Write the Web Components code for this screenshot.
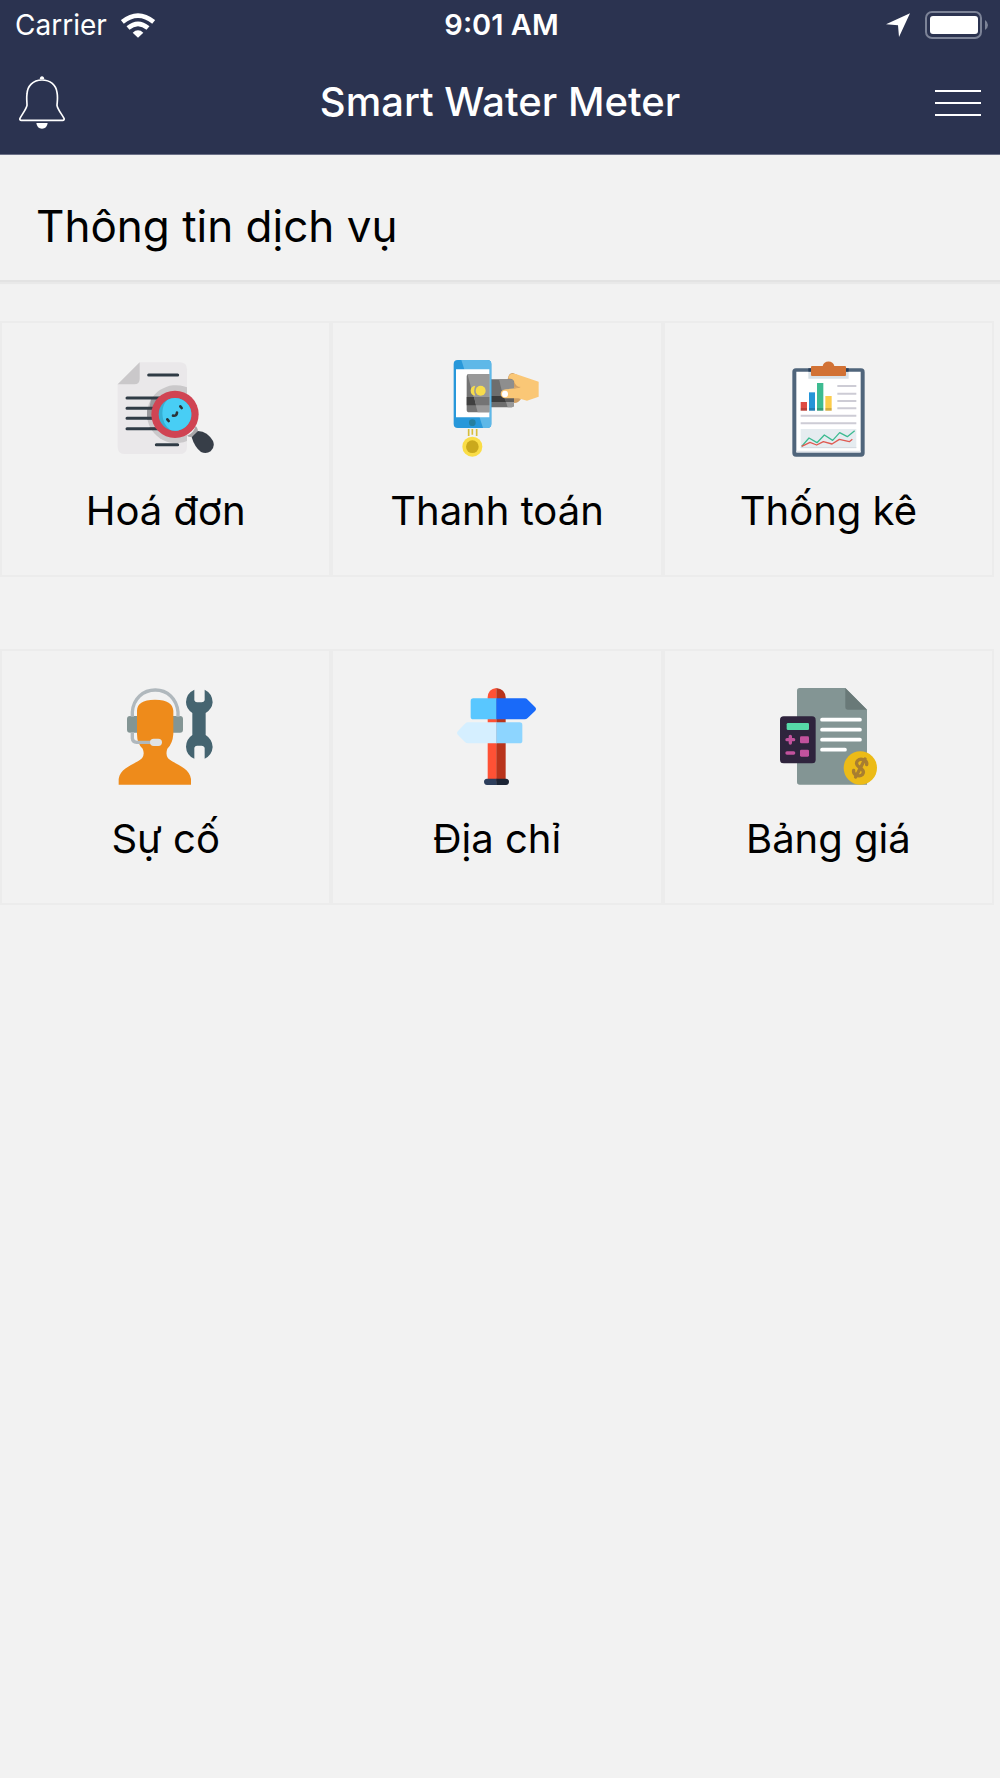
<!DOCTYPE html>
<html lang="vi">
<head>
  <meta charset="utf-8">
  <meta name="viewport" content="width=device-width, initial-scale=1">
  <title>Smart Water Meter</title>
  <style>
    body {
      margin: 0;
      min-height: 100vh;
      background: #f2f2f2;
      color: #000;
      font-family: Inter, Roboto, "Liberation Sans", sans-serif;
    }
  </style>
</head>
<body>
  <app-header>
    <status-bar slot="status" carrier="Carrier" time="9:01 AM"></status-bar>
    Smart Water Meter
  </app-header>
  <main>
    <section-title>Thông tin dịch vụ</section-title>
    <service-grid>
      <service-card icon="invoice">Hoá đơn</service-card>
      <service-card icon="payment">Thanh toán</service-card>
      <service-card icon="stats">Thống kê</service-card>
      <service-card icon="support">Sự cố</service-card>
      <service-card icon="address">Địa chỉ</service-card>
      <service-card icon="pricing">Bảng giá</service-card>
    </service-grid>
  </main>

  <script>
    const ICONS = {
      invoice: `
        <svg viewBox="52 45 291 291" aria-hidden="true">
          <path fill="#eae8ea" d="M120 52H240Q262 52 262 74V305Q262 327 240 327H76Q54 327 54 305V118Z"/>
          <path fill="#cac8ca" d="M120 52V102Q120 118 104 118H54Z"/>
          <path fill="#cac8ca" d="M262 127A87 87 0 1 0 262 288Z"/>
          <g stroke="#2f3b45" stroke-width="9" stroke-linecap="round">
            <path d="M147 90H234M82 159H180M82 190H170M82 220H170M82 251H180M170 299H234"/>
          </g>
          <path fill="#3b4048" opacity=".35" d="M155 159H180L165 194H148ZM142 186H160V225H142ZM148 246H165L180 255H155Z"/>
          <path fill="#a9a7a9" d="M262 272Q282 265 288 243Q297 252 294 264Q285 276 276 276Q267 277 262 272Z"/>
          <path fill="#373e48" d="M295 258Q324 260 340 288Q347 306 333 319Q320 328 304 321Q285 307 276 277Z"/>
          <circle cx="226" cy="208" r="71" fill="#d04453"/>
          <circle cx="226" cy="208" r="49" fill="#36b0d4"/>
          <path fill="#48cef5" d="M203 165A49 49 0 1 1 212 255Q188 237 188 205Q188 180 203 165Z"/>
          <g fill="none" stroke="#2a3439" stroke-width="8" stroke-linecap="round">
            <path d="M242 184L246 189M203 223L207 228"/>
            <path d="M220 212Q231 214 232 203"/>
          </g>
        </svg>`,
      payment: `
        <svg viewBox="25 45 291 291" aria-hidden="true">
          <path fill="#cf9f64" d="M204 103Q206 84 220 84L233 90L244 125V162Q232 178 218 172Z"/>
          <rect x="130" y="103" width="93" height="84" rx="7" fill="#6e6e6e"/>
          <path fill="#8e8e8e" d="M178 103H216Q223 103 223 110V136H186Z"/>
          <path fill="#3c3c3c" d="M150 153H192L199 171H150Z"/>
          <path fill="#5c5c5c" d="M192 153H223V171H199Z"/>
          <path fill="#999" d="M199 171H223V180Q223 187 216 187H204Z"/>
          <path fill="#fac776" d="M210 89Q221 83 235 89L297 110V155L262 167L236 160H198Q183 158 183 146Q184 134 199 133L243 128Q226 124 223 108Q218 100 206 100Z"/>
          <path fill="#dca968" d="M223 125H243L223 131Z"/>
          <ellipse cx="196" cy="147" rx="9" ry="10" fill="#fff"/>
          <rect x="42" y="45" width="113" height="204" rx="12" fill="#2898da"/>
          <path fill="#5eb8e8" d="M65 45H143Q155 45 155 57V237Q155 249 143 249H130Z"/>
          <path fill="#fff" d="M49 73H149V217H49Z"/>
          <path fill="#747474" d="M149 87H89Q81 87 81 95V194Q81 202 89 202H149Z"/>
          <path fill="#999" d="M83 87H149V202H114Z"/>
          <path fill="#404040" d="M81 156H103L109 181H81Z"/>
          <path fill="#747474" d="M103 156H149V181H109Z"/>
          <path fill="#f7dc4c" d="M107 122Q93 124 93 137Q93 150 107 152Q100 137 107 122Z"/>
          <circle cx="123" cy="137" r="15" fill="#f7dc4c"/>
          <circle cx="98" cy="233" r="10" fill="#267f9f"/>
          <path stroke="#d7bd3c" stroke-width="5" d="M87 252V273M98 252V269M111 252V273"/>
          <circle cx="98" cy="305" r="30" fill="#fadd46"/>
          <circle cx="98" cy="305" r="19" fill="#caa91c"/>
        </svg>`,
      stats: `
        <svg viewBox="30 45 291 291" aria-hidden="true">
          <rect x="67" y="70" width="217" height="265" rx="11" fill="#50657b"/>
          <path fill="#fff" d="M79 80H272V321H79Z"/>
          <path fill="#e1e5ea" d="M79 317H272V323H79Z"/>
          <path fill="#d9e1e7" d="M115 80H236V101H115Z"/>
          <path fill="#283f5b" d="M115 70H236V80H115Z"/>
          <path fill="#d27235" d="M126 63H158A18 18 0 0 1 193 63H225Q228 63 228 66V90Q228 93 225 93H126Q123 93 123 90V66Q123 63 126 63Z"/>
          <path fill="#df4c43" d="M92 171H111V197H92Z"/>
          <path fill="#2494d8" d="M117 142H135V197H117Z"/>
          <path fill="#3dbb91" d="M141 114H160V197H141Z"/>
          <path fill="#fccd4b" d="M166 153H185V197H166Z"/>
          <path fill="#000" opacity=".16" d="M92 189H111V197H92ZM117 189H135V197H117ZM141 189H160V197H141ZM166 189H185V197H166Z"/>
          <path stroke="#cdccd5" stroke-width="6" d="M202 123H259M202 146H259M202 168H259M202 190H259M92 212H259M92 235H259"/>
          <path fill="#e6ecf0" d="M92 252H259V308H92Z"/>
          <path stroke="#d4d9df" stroke-width="3" d="M92 308H259"/>
          <g fill="none" stroke-width="4" stroke-linejoin="round">
            <path stroke="#3dbb91" d="M95 304L117 279L141 293L163 270L188 286L209 263L232 275L254 257"/>
            <path stroke="#df5a52" d="M95 304L120 292L140 300L160 290L186 297L208 283L238 290L247 283"/>
          </g>
        </svg>`,
      support: `
        <svg viewBox="52 40 291 291" aria-hidden="true">
          <rect x="82" y="124" width="46" height="50" rx="9" fill="#839594"/>
          <rect x="204" y="124" width="46" height="50" rx="9" fill="#839594"/>
          <path fill="none" stroke="#b0b8bd" stroke-width="10" d="M98 126V112C101 72 130 46 167 46C203 46 231 72 235 112V126"/>
          <path fill="#ee8b1b" d="M112 108C113 87 128 75 166 75C204 75 219 87 221 108V178Q219 207 203 222Q197 239 205 251C224 269 269 277 274 313V330H57V313C62 277 108 269 127 251Q136 239 129 222Q112 207 112 178Z"/>
          <path fill="none" stroke="#b0b8bd" stroke-width="10" d="M98 173V191Q99 202 111 203H157"/>
          <rect x="151" y="192" width="36" height="22" rx="11" fill="#e0e3e5"/>
          <path fill="#456470" d="M284 45V77Q286 83 292 83H306Q313 83 315 77V45Q338 56 339 83Q337 104 318 115V181Q338 194 339 217Q337 242 315 252V219Q312 213 306 213H292Q286 213 284 219V252Q260 242 259 216Q260 193 278 181V115Q259 102 259 82Q260 56 284 45Z"/>
        </svg>`,
      address: `
        <svg viewBox="25 40 291 291" aria-hidden="true">
          <path fill="#ff5135" d="M170 40Q145 43 144 68V320H171Z"/>
          <path fill="#b9341c" d="M170 40Q196 43 198 68V320H170Z"/>
          <path fill="#59c7ff" d="M171 71H101Q93 71 93 79V126Q93 134 101 134H171Z"/>
          <path fill="#196af9" d="M170 71H255Q260 71 264 75L286 97Q292 103 286 109L264 130Q260 134 255 134H170Z"/>
          <path fill="#d5efff" d="M171 143H85Q80 143 76 147L55 169Q49 175 55 181L76 202Q80 206 85 206H171Z"/>
          <path fill="#8dd5ff" d="M170 143H240Q248 143 248 151V198Q248 206 240 206H170Z"/>
          <path fill="#2d3e5c" d="M171 312H142Q133 313 133 321Q133 330 142 331H171Z"/>
          <path fill="#1b2435" d="M170 312H199Q208 313 208 321Q208 330 199 331H170Z"/>
        </svg>`,
      pricing: `
        <svg viewBox="30 40 291 291" aria-hidden="true">
          <path fill="#839594" d="M89 40H226L291 105V330H89Q81 330 81 322V48Q81 40 89 40Z"/>
          <path fill="#697978" d="M226 40L291 105H234Q226 105 226 97Z"/>
          <path stroke="#fff" stroke-width="11" stroke-linecap="round" d="M156 135H270M156 165H270M156 195H270M156 225H225"/>
          <rect x="30" y="125" width="107" height="141" rx="11" fill="#2f243d"/>
          <rect x="50" y="145" width="67" height="21" rx="4" fill="#56d9a8"/>
          <g fill="#c2529d">
            <rect x="90" y="185" width="27" height="21" rx="4"/>
            <rect x="90" y="225" width="27" height="21" rx="4"/>
          </g>
          <path stroke="#c2529d" stroke-width="10" stroke-linecap="round" d="M51 195H71M61 185V205M51 235H71"/>
          <circle cx="271" cy="280" r="50" fill="#ecbb17"/>
          <g fill="none" stroke="#a87e30" stroke-width="10" stroke-linecap="round">
            <path d="M290 270Q292 260 282 256Q270 251 263 258Q255 267 266 276L275 283Q284 291 277 300Q270 307 258 301Q249 296 251 287"/>
            <path d="M285 253L257 307"/>
          </g>
        </svg>`,
    };

    class StatusBar extends HTMLElement {
      constructor() {
        super();
        this.attachShadow({ mode: 'open' });
      }

      connectedCallback() {
        this.shadowRoot.innerHTML = `
          <style>
            :host {
              display: grid;
              grid-template-columns: 1fr auto 1fr;
              align-items: center;
              padding: 7px 12px 9px 15px;
              font-size: 28px;
              line-height: 36px;
            }

            .left,
            .right {
              display: flex;
              align-items: center;
              gap: 14px;
            }

            .right {
              justify-content: flex-end;
            }

            .time {
              font-size: 29px;
              font-weight: 600;
            }

            svg {
              display: block;
            }
          </style>
          <div class="left">
            <span>${this.getAttribute('carrier')}</span>
            <svg width="34" height="25" viewBox="362 35 102 75" aria-hidden="true">
              <g fill="none" stroke="#fff" stroke-width="14">
                <path d="M366 62Q413 24 460 62"/>
                <path d="M383 80Q413 55 443 80"/>
              </g>
              <path fill="#fff" d="M397 94Q413 80 429 94L413 109Z"/>
            </svg>
          </div>
          <span class="time">${this.getAttribute('time')}</span>
          <div class="right">
            <svg width="25" height="24" viewBox="1160 38 75 72" aria-hidden="true">
              <path fill="#fff" d="M1232 39L1199 110L1196 75L1160 72Z"/>
            </svg>
            <svg width="63" height="28" viewBox="0 0 63 28" aria-hidden="true">
              <rect x="1" y="1" width="55" height="26" rx="6" fill="none" stroke="#7c8397" stroke-width="2"/>
              <rect x="5" y="5" width="48" height="18" rx="3" fill="#fff"/>
              <path fill="#7c8397" d="M60 9Q63 11 63 14Q63 17 60 19Z"/>
            </svg>
          </div>
        `;
      }
    }

    class AppHeader extends HTMLElement {
      constructor() {
        super();
        this.attachShadow({ mode: 'open' });
      }

      connectedCallback() {
        this.shadowRoot.innerHTML = `
          <style>
            :host {
              display: block;
              background: #2b3350;
              border-bottom: 1px solid #6b7087;
              color: #fff;
            }

            .bar {
              display: flex;
              align-items: center;
              justify-content: space-between;
              padding: 24px 19px;
            }

            h1 {
              margin: 0;
              padding-bottom: 2px;
              font-size: 40px;
              font-weight: 500;
              line-height: 48px;
            }

            button {
              padding: 0;
              border: 0;
              background: none;
              color: inherit;
              cursor: pointer;
            }

            svg {
              display: block;
            }
          </style>
          <slot name="status"></slot>
          <div class="bar">
            <button type="button" aria-label="Thông báo">
              <svg width="46" height="54" viewBox="58 230 138 162" aria-hidden="true">
                <path fill="none" stroke="#fff" stroke-width="5" stroke-linejoin="round" d="M127 242C99 242 83 261 82 284C80 296 82 306 82 318C80 329 67 345 61 357Q59 363 65 363H189Q195 363 193 357C187 345 174 331 172 318C173 304 175 294 172 279C169 257 152 242 127 242Z"/>
                <path fill="#fff" d="M120 240Q121 231 127 231Q133 231 134 240ZM110 371H144Q142 388 127 388Q112 388 110 371Z"/>
              </svg>
            </button>
            <h1><slot></slot></h1>
            <button type="button" aria-label="Menu">
              <svg width="46" height="54" viewBox="0 0 46 54" aria-hidden="true">
                <path stroke="#fff" stroke-width="2" d="M0 15H46M0 27H46M0 39H46"/>
              </svg>
            </button>
          </div>
        `;
      }
    }

    class SectionTitle extends HTMLElement {
      constructor() {
        super();
        this.attachShadow({ mode: 'open' });
      }

      connectedCallback() {
        this.shadowRoot.innerHTML = `
          <style>
            :host {
              display: block;
              padding: 44px 36px 27px;
              border-bottom: 2px solid #e3e3e3;
              box-shadow: 0 2px 1px #e9e9e9;
            }

            h2 {
              margin: 0;
              font-size: 44px;
              font-weight: 400;
              line-height: 54px;
            }
          </style>
          <h2><slot></slot></h2>
        `;
      }
    }

    class ServiceGrid extends HTMLElement {
      constructor() {
        super();
        this.attachShadow({ mode: 'open' });
      }

      connectedCallback() {
        this.shadowRoot.innerHTML = `
          <style>
            :host {
              display: grid;
              grid-template-columns: repeat(3, 1fr);
              row-gap: 72px;
              padding: 39px 6px 39px 0;
            }
          </style>
          <slot></slot>
        `;
      }
    }

    class ServiceCard extends HTMLElement {
      constructor() {
        super();
        this.attachShadow({ mode: 'open' });
      }

      connectedCallback() {
        this.shadowRoot.innerHTML = `
          <style>
            :host {
              display: block;
            }

            button {
              display: flex;
              flex-direction: column;
              align-items: center;
              gap: 28px;
              box-sizing: border-box;
              width: 100%;
              padding: 37px 0 38px;
              border: 2px solid #ececec;
              background: none;
              color: inherit;
              font: inherit;
              font-size: 40px;
              line-height: 52px;
              cursor: pointer;
            }

            svg {
              display: block;
              width: 97px;
              height: 97px;
            }
          </style>
          <button type="button">
            ${ICONS[this.getAttribute('icon')]}
            <span><slot></slot></span>
          </button>
        `;
      }
    }

    customElements.define('status-bar', StatusBar);
    customElements.define('app-header', AppHeader);
    customElements.define('section-title', SectionTitle);
    customElements.define('service-grid', ServiceGrid);
    customElements.define('service-card', ServiceCard);
  </script>
</body>
</html>
